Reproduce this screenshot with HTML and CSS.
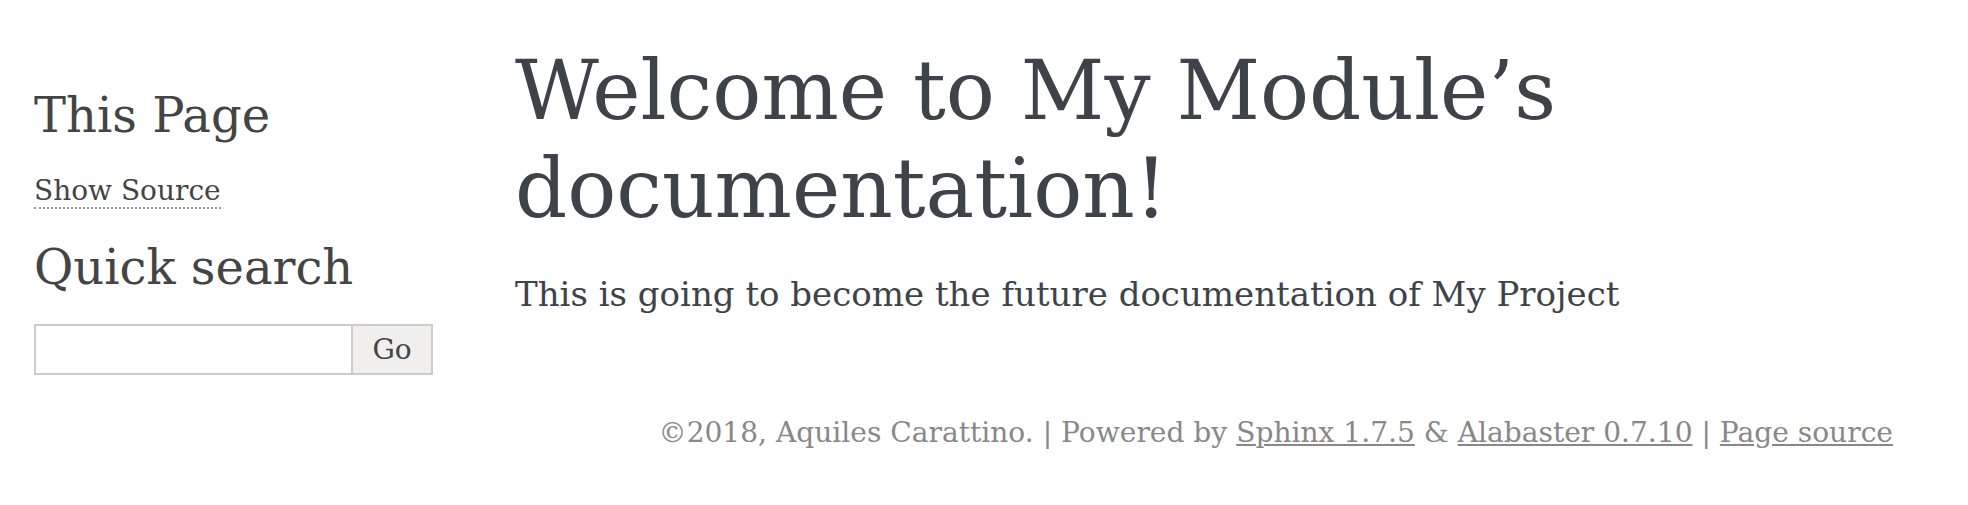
FILE: index.html
```html
<!DOCTYPE html>
<html lang="en">
<head>
<meta charset="utf-8">
<title>Welcome to My Module’s documentation!</title>
<link rel="stylesheet" href="styles.css">
</head>
<body>
<div class="document">
  <aside class="sidebar">
    <h3 class="side-title">This Page</h3>
    <ul class="page-menu">
      <li><a href="#" class="side-link">Show Source</a></li>
    </ul>
    <h3 class="side-title side-title-search">Quick search</h3>
    <form class="search-form">
      <input type="text" class="search-input" aria-label="search">
      <button type="button" class="search-button">Go</button>
    </form>
  </aside>
  <main class="body">
    <h1 class="title">Welcome to My Module’s documentation!</h1>
    <p class="intro">This is going to become the future documentation of My Project</p>
  </main>
</div>
<footer class="footer">
  ©2018, Aquiles Carattino. | Powered by <a href="#">Sphinx 1.7.5</a> &amp; <a href="#">Alabaster 0.7.10</a> | <a href="#">Page source</a>
</footer>
</body>
</html>
```
FILE: styles.css
```css
html, body {
  margin: 0;
  padding: 0;
  background: #ffffff;
}

body {
  font-family: "DejaVu Serif", Georgia, serif;
  color: #3e4349;
}

.document {
  display: flex;
  align-items: flex-start;
  padding-left: 34px;
}

.sidebar {
  width: 481px;
  flex: none;
  padding-top: 86.6px;
  color: #444;
}

.side-title {
  margin: 0;
  font-size: 48px;
  line-height: 57.6px;
  font-weight: normal;
  color: #444;
}

.side-title-search {
  margin-top: 27.3px;
}

.page-menu {
  list-style: none;
  margin: 26px 0 0 0;
  padding: 0;
  font-size: 28px;
  line-height: 42px;
}

.side-link {
  color: #444;
  text-decoration: none;
  border-bottom: 2px dotted #999;
}

.search-form {
  display: flex;
  margin-top: 26.8px;
  height: 51px;
}

.search-input {
  box-sizing: border-box;
  width: 319px;
  height: 51px;
  margin: 0;
  border: 2px solid #ccc;
  background: #fff;
  font-family: "DejaVu Serif", Georgia, serif;
  font-size: 28px;
  padding: 0 6px;
}

.search-button {
  box-sizing: border-box;
  width: 80px;
  height: 51px;
  margin: 0;
  border: 2px solid #ccc;
  border-left: none;
  background: #f0efee;
  color: #444;
  font-family: "DejaVu Serif", Georgia, serif;
  font-size: 28px;
  padding: 0;
}

.body {
  flex: 1;
  padding-top: 41.8px;
}

.title {
  margin: 0;
  font-size: 81.6px;
  line-height: 98px;
  font-weight: normal;
  color: #3e4349;
}

.intro {
  margin: 33.7px 0 0 0;
  font-size: 34px;
  line-height: 47.6px;
}

.footer {
  margin-top: 38px;
  padding-right: 75px;
  text-align: right;
  font-size: 28.1px;
  line-height: 40px;
  color: #888;
}

.footer a {
  color: #888;
  text-decoration: underline;
}
```
